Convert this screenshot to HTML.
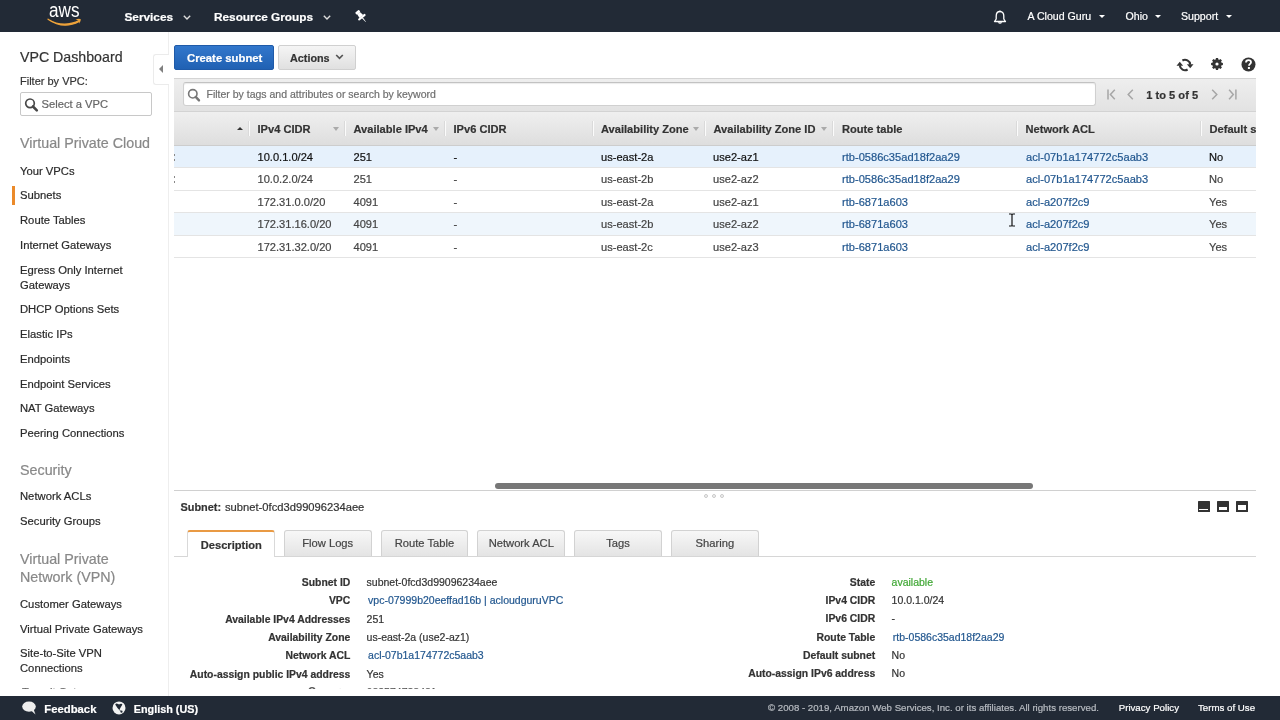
<!DOCTYPE html>
<html><head><meta charset="utf-8">
<style>
*{box-sizing:border-box;margin:0;padding:0}
html,body{width:1280px;height:720px;overflow:hidden;background:#fff;font-family:"Liberation Sans",sans-serif;color:#333;position:relative}
.a{position:absolute;white-space:nowrap}
#w{position:absolute;left:0;top:0;width:1280px;height:720px;will-change:transform}
.a{-webkit-text-stroke:0.2px currentColor}
</style></head><body><div id="w">
<div style="position:absolute;left:0;top:0;width:1280px;height:32px;background:#222a36"></div>
<svg class="a" style="left:40px;top:0px" width="50" height="32" viewBox="0 0 50 32">
<text x="9" y="16.8" font-family="Liberation Sans" font-size="19.5" fill="#fff" textLength="30.5" lengthAdjust="spacingAndGlyphs">aws</text>
<path d="M8 19.2 Q23 28.5 39.5 20.3 L39.3 21.5 Q23 30 8 19.2 Z" fill="#eda23a" stroke="#eda23a" stroke-width="1.2" stroke-linejoin="round"/>
<path d="M35.5 19.4 Q39.5 18.2 40.8 19.3 Q41 21 39 23.8 Q39.6 21.3 38.6 20.6 Q37.5 20 35.5 19.4 Z" fill="#eda23a"/>
</svg>
<div class="a" style="left:124.5px;top:12px;font-size:11.8px;line-height:11.8px;color:#fff;font-weight:700;">Services</div>
<svg class="a" style="left:183px;top:15px" width="8" height="5" viewBox="0 0 8 5"><path d="M0.8 0.8 L4 4 L7.2 0.8" stroke="#ddd" stroke-width="1.4" fill="none"/></svg>
<div class="a" style="left:214px;top:12px;font-size:11.8px;line-height:11.8px;color:#fff;font-weight:700;">Resource Groups</div>
<svg class="a" style="left:323px;top:15px" width="8" height="5" viewBox="0 0 8 5"><path d="M0.8 0.8 L4 4 L7.2 0.8" stroke="#ddd" stroke-width="1.4" fill="none"/></svg>
<svg class="a" style="left:350px;top:6px" width="20" height="20" viewBox="-10 -10 20 20"><g transform="translate(1.2 0.4) rotate(-40) scale(1.05)" fill="#fff"><rect x="-2.3" y="-6.4" width="4.6" height="2.6" rx="0.8"/><path d="M-1.7 -4 L1.7 -4 L2.3 0.2 L-2.3 0.2 Z"/><rect x="-4.3" y="0" width="8.6" height="2" rx="0.8"/><path d="M-0.6 1.8 L0.6 1.8 L0.2 6.8 L-0.2 6.8 Z"/></g></svg>
<svg class="a" style="left:992.5px;top:9.5px" width="14" height="15" viewBox="0 0 14 15"><path d="M7 1.5 C4.2 1.5 3.2 3.8 3.2 6 L3.2 9 L1.5 11.5 L12.5 11.5 L10.8 9 L10.8 6 C10.8 3.8 9.8 1.5 7 1.5 Z" stroke="#fff" stroke-width="1.3" fill="none" stroke-linejoin="round"/><path d="M4.6 12.2 Q7 15.3 9.4 12.2 Z" fill="#fff"/><circle cx="7" cy="1.3" r="0.9" fill="#fff"/></svg>
<div class="a" style="left:1027.5px;top:11px;font-size:10.6px;line-height:10.6px;color:#fff;">A Cloud Guru</div>
<div class="a" style="left:1098.5px;top:15.3px;width:0;height:0;border-left:3px solid transparent;border-right:3px solid transparent;border-top:3.5px solid #fff"></div>
<div class="a" style="left:1125.5px;top:11px;font-size:10.6px;line-height:10.6px;color:#fff;">Ohio</div>
<div class="a" style="left:1154.5px;top:15.3px;width:0;height:0;border-left:3px solid transparent;border-right:3px solid transparent;border-top:3.5px solid #fff"></div>
<div class="a" style="left:1181px;top:11px;font-size:10.6px;line-height:10.6px;color:#fff;">Support</div>
<div class="a" style="left:1226px;top:15.3px;width:0;height:0;border-left:3px solid transparent;border-right:3px solid transparent;border-top:3.5px solid #fff"></div>
<div style="position:absolute;left:168px;top:32px;width:1px;height:664px;background:#eeeeee"></div>
<div class="a" style="left:20px;top:50px;font-size:14.2px;line-height:14.2px;color:#333;">VPC Dashboard</div>
<div class="a" style="left:20px;top:76px;font-size:11px;line-height:11px;color:#333;">Filter by VPC:</div>
<div class="a" style="left:20px;top:92px;width:132px;height:24px;border:1px solid #c8c8c8;border-radius:2px;background:#fff"></div>
<svg class="a" style="left:24px;top:96.5px" width="15" height="16" viewBox="0 0 15 16"><circle cx="6" cy="6.3" r="4.3" stroke="#484848" stroke-width="1.7" fill="none"/><path d="M9 9.5 L12.8 13.3" stroke="#484848" stroke-width="2.6" stroke-linecap="round"/></svg>
<div class="a" style="left:41.5px;top:99px;font-size:11.2px;line-height:11.2px;color:#666;">Select a VPC</div>
<div class="a" style="left:153px;top:53.5px;width:16px;height:31.5px;border:1px solid #ebebeb;border-right:none;border-radius:3px 0 0 3px;background:#fff"></div>
<div class="a" style="left:159px;top:64.8px;width:0;height:0;border-top:4.4px solid transparent;border-bottom:4.4px solid transparent;border-right:4.8px solid #808080"></div>
<div class="a" style="left:20px;top:136px;font-size:14.3px;line-height:14.3px;color:#888;">Virtual Private Cloud</div>
<div class="a" style="left:20px;top:166px;font-size:11.25px;line-height:11.25px;color:#2a2a2a;">Your VPCs</div>
<div class="a" style="left:20px;top:190px;font-size:11.25px;line-height:11.25px;color:#2a2a2a;">Subnets</div>
<div class="a" style="left:20px;top:215px;font-size:11.25px;line-height:11.25px;color:#2a2a2a;">Route Tables</div>
<div class="a" style="left:20px;top:240px;font-size:11.25px;line-height:11.25px;color:#2a2a2a;">Internet Gateways</div>
<div class="a" style="left:20px;top:265px;font-size:11.25px;line-height:11.25px;color:#2a2a2a;">Egress Only Internet</div>
<div class="a" style="left:20px;top:280px;font-size:11.25px;line-height:11.25px;color:#2a2a2a;">Gateways</div>
<div class="a" style="left:20px;top:304px;font-size:11.25px;line-height:11.25px;color:#2a2a2a;">DHCP Options Sets</div>
<div class="a" style="left:20px;top:329px;font-size:11.25px;line-height:11.25px;color:#2a2a2a;">Elastic IPs</div>
<div class="a" style="left:20px;top:354px;font-size:11.25px;line-height:11.25px;color:#2a2a2a;">Endpoints</div>
<div class="a" style="left:20px;top:379px;font-size:11.25px;line-height:11.25px;color:#2a2a2a;">Endpoint Services</div>
<div class="a" style="left:20px;top:403px;font-size:11.25px;line-height:11.25px;color:#2a2a2a;">NAT Gateways</div>
<div class="a" style="left:20px;top:428px;font-size:11.25px;line-height:11.25px;color:#2a2a2a;">Peering Connections</div>
<div class="a" style="left:12px;top:185.5px;width:2.5px;height:19px;background:#eb8a2a"></div>
<div class="a" style="left:20px;top:463px;font-size:14.3px;line-height:14.3px;color:#888;">Security</div>
<div class="a" style="left:20px;top:491px;font-size:11.25px;line-height:11.25px;color:#2a2a2a;">Network ACLs</div>
<div class="a" style="left:20px;top:516px;font-size:11.25px;line-height:11.25px;color:#2a2a2a;">Security Groups</div>
<div class="a" style="left:20px;top:552px;font-size:14.3px;line-height:14.3px;color:#888;">Virtual Private</div>
<div class="a" style="left:20px;top:570px;font-size:14.3px;line-height:14.3px;color:#888;">Network (VPN)</div>
<div class="a" style="left:20px;top:599px;font-size:11.25px;line-height:11.25px;color:#2a2a2a;">Customer Gateways</div>
<div class="a" style="left:20px;top:624px;font-size:11.25px;line-height:11.25px;color:#2a2a2a;">Virtual Private Gateways</div>
<div class="a" style="left:20px;top:648px;font-size:11.25px;line-height:11.25px;color:#2a2a2a;">Site-to-Site VPN</div>
<div class="a" style="left:20px;top:663px;font-size:11.25px;line-height:11.25px;color:#2a2a2a;">Connections</div>
<div class="a" style="left:174px;top:45px;width:100px;height:25px;border-radius:2px;background:linear-gradient(#3277cc,#2061b3);border:1px solid #1f5aa8"></div>
<div class="a" style="left:187px;top:53px;font-size:11.3px;line-height:11.3px;color:#fff;font-weight:700;">Create subnet</div>
<div class="a" style="left:277.5px;top:45px;width:78px;height:25px;border-radius:2px;background:linear-gradient(#f5f5f5,#e0e0e0);border:1px solid #d0d0d0"></div>
<div class="a" style="left:290px;top:53px;font-size:10.8px;line-height:10.8px;color:#333;font-weight:700;">Actions</div>
<svg class="a" style="left:335px;top:54px" width="9" height="6" viewBox="0 0 9 6"><path d="M1.2 1 L4.5 4.3 L7.8 1" stroke="#555" stroke-width="1.7" fill="none"/></svg>
<svg class="a" style="left:1175px;top:57px" width="20" height="16" viewBox="0 0 20 16">
<path d="M7.4 3.5 A5.2 5.2 0 0 1 15.2 7.6" stroke="#333" stroke-width="2.1" fill="none"/>
<path d="M12.6 12.5 A5.2 5.2 0 0 1 4.8 8.4" stroke="#333" stroke-width="2.1" fill="none"/>
<path d="M11.9 7.2 L18.5 7.2 L15.2 11.3 Z" fill="#333"/>
<path d="M1.5 8.8 L8.1 8.8 L4.8 4.7 Z" fill="#333"/>
</svg>
<svg class="a" style="left:1210.1px;top:56.9px" width="14" height="14" viewBox="0 0 14 14"><path d="M5.60 2.83 L5.95 1.09 L8.05 1.09 L8.40 2.83 L8.96 3.06 L10.43 2.08 L11.92 3.57 L10.94 5.04 L11.17 5.60 L12.91 5.95 L12.91 8.05 L11.17 8.40 L10.94 8.96 L11.92 10.43 L10.43 11.92 L8.96 10.94 L8.40 11.17 L8.05 12.91 L5.95 12.91 L5.60 11.17 L5.04 10.94 L3.57 11.92 L2.08 10.43 L3.06 8.96 L2.83 8.40 L1.09 8.05 L1.09 5.95 L2.83 5.60 L3.06 5.04 L2.08 3.57 L3.57 2.08 L5.04 3.06 Z" fill="#333"/><circle cx="7" cy="7" r="4.5" fill="#333"/><circle cx="7" cy="7" r="1.6" fill="#fff"/></svg>
<svg class="a" style="left:1241px;top:57px" width="15" height="15" viewBox="0 0 15 15">
<circle cx="7.5" cy="7.5" r="7" fill="#333"/>
<path d="M5 5.6 C5 3.9 6.1 3.2 7.5 3.2 C9 3.2 10 4.1 10 5.3 C10 6.9 8 7 8 8.8" stroke="#fff" stroke-width="1.8" fill="none"/>
<rect x="6.9" y="10" width="2" height="2" fill="#fff"/></svg>
<div class="a" style="left:174px;top:77.5px;width:1082px;height:34.5px;background:linear-gradient(#eeeeee,#e2e2e2);border-top:1px solid #d4d4d4"></div>
<div class="a" style="left:182.5px;top:82px;width:913px;height:24px;background:#fff;border:1px solid #d0d0d0;border-top-color:#c2c2c2;border-radius:3px;box-shadow:inset 0 1px 1px rgba(0,0,0,0.08)"></div>
<svg class="a" style="left:187px;top:88px" width="14" height="15" viewBox="0 0 14 15"><circle cx="5.8" cy="5.8" r="4.2" stroke="#777" stroke-width="1.6" fill="none"/><path d="M8.7 8.9 L12 12.4" stroke="#777" stroke-width="2.4" stroke-linecap="round"/></svg>
<div class="a" style="left:206.5px;top:89px;font-size:10.5px;line-height:10.5px;color:#6f6f6f;">Filter by tags and attributes or search by keyword</div>
<svg class="a" style="left:1105px;top:89px" width="140" height="12" viewBox="0 0 140 12" stroke="#a6a6a6" stroke-width="1.5" fill="none"><path d="M3 0.4 V10.6"/><path d="M9.8 0.8 L5.4 5.5 L9.8 10.3"/><path d="M27.8 0.8 L23.2 5.5 L27.8 10.3"/><path d="M107.2 0.8 L111.8 5.5 L107.2 10.3"/><path d="M124.1 0.8 L128.3 5.5 L124.1 10.3"/><path d="M130.9 0.4 V10.6"/></svg>
<div class="a" style="left:1146.3px;top:90px;font-size:11.1px;line-height:11.1px;color:#333;font-weight:700;">1 to 5 of 5</div>
<div class="a" style="left:174px;top:111px;width:1082px;height:35px;background:linear-gradient(#efefef,#dedede);border-top:1px solid #d3d3d3;border-bottom:1px solid #cdcdcd"></div>
<div class="a" style="left:248px;top:121px;width:1px;height:15px;background:#dadada;box-shadow:1px 0 0 #fbfbfb"></div>
<div class="a" style="left:344px;top:121px;width:1px;height:15px;background:#dadada;box-shadow:1px 0 0 #fbfbfb"></div>
<div class="a" style="left:444px;top:121px;width:1px;height:15px;background:#dadada;box-shadow:1px 0 0 #fbfbfb"></div>
<div class="a" style="left:592px;top:121px;width:1px;height:15px;background:#dadada;box-shadow:1px 0 0 #fbfbfb"></div>
<div class="a" style="left:704px;top:121px;width:1px;height:15px;background:#dadada;box-shadow:1px 0 0 #fbfbfb"></div>
<div class="a" style="left:832px;top:121px;width:1px;height:15px;background:#dadada;box-shadow:1px 0 0 #fbfbfb"></div>
<div class="a" style="left:1015.5px;top:121px;width:1px;height:15px;background:#dadada;box-shadow:1px 0 0 #fbfbfb"></div>
<div class="a" style="left:1200px;top:121px;width:1px;height:15px;background:#dadada;box-shadow:1px 0 0 #fbfbfb"></div>
<div class="a" style="left:237.3px;top:126.5px;width:0;height:0;border-left:3px solid transparent;border-right:3px solid transparent;border-bottom:3.5px solid #333"></div>
<div class="a" style="left:333px;top:127px;width:0;height:0;border-left:3.5px solid transparent;border-right:3.5px solid transparent;border-top:4px solid #aaa"></div>
<div class="a" style="left:432.5px;top:127px;width:0;height:0;border-left:3.5px solid transparent;border-right:3.5px solid transparent;border-top:4px solid #aaa"></div>
<div class="a" style="left:693px;top:127px;width:0;height:0;border-left:3.5px solid transparent;border-right:3.5px solid transparent;border-top:4px solid #aaa"></div>
<div class="a" style="left:820.5px;top:127px;width:0;height:0;border-left:3.5px solid transparent;border-right:3.5px solid transparent;border-top:4px solid #aaa"></div>
<div class="a" style="left:257.5px;top:124px;font-size:11.1px;line-height:11.1px;color:#333;font-weight:700;">IPv4 CIDR</div>
<div class="a" style="left:353.5px;top:124px;font-size:11.1px;line-height:11.1px;color:#333;font-weight:700;">Available IPv4</div>
<div class="a" style="left:453.5px;top:124px;font-size:11.1px;line-height:11.1px;color:#333;font-weight:700;">IPv6 CIDR</div>
<div class="a" style="left:601px;top:124px;font-size:11.1px;line-height:11.1px;color:#333;font-weight:700;">Availability Zone</div>
<div class="a" style="left:713.5px;top:124px;font-size:11.1px;line-height:11.1px;color:#333;font-weight:700;">Availability Zone ID</div>
<div class="a" style="left:842px;top:124px;font-size:11.1px;line-height:11.1px;color:#333;font-weight:700;">Route table</div>
<div class="a" style="left:1025.5px;top:124px;font-size:11.1px;line-height:11.1px;color:#333;font-weight:700;">Network ACL</div>
<div class="a" style="left:1209.5px;top:124px;font-size:11.1px;line-height:11.1px;color:#333;font-weight:700;">Default subnet</div>
<div class="a" style="left:174px;top:146.0px;width:1082px;height:22.4px;background:#e6f1fc;border-bottom:1px solid #e4e4e4"></div>
<div class="a" style="left:174px;top:168.4px;width:1082px;height:22.4px;background:#fff;border-bottom:1px solid #e4e4e4"></div>
<div class="a" style="left:174px;top:190.8px;width:1082px;height:22.4px;background:#fff;border-bottom:1px solid #e4e4e4"></div>
<div class="a" style="left:174px;top:213.2px;width:1082px;height:22.4px;background:#eff6fc;border-bottom:1px solid #e4e4e4"></div>
<div class="a" style="left:174px;top:235.6px;width:1082px;height:22.4px;background:#fff;border-bottom:1px solid #e4e4e4"></div>
<div class="a" style="left:257.5px;top:152px;font-size:11.1px;line-height:11.1px;color:#111;">10.0.1.0/24</div>
<div class="a" style="left:353.5px;top:152px;font-size:11.1px;line-height:11.1px;color:#111;">251</div>
<div class="a" style="left:453.5px;top:152px;font-size:11.1px;line-height:11.1px;color:#111;">-</div>
<div class="a" style="left:601px;top:152px;font-size:11.1px;line-height:11.1px;color:#111;">us-east-2a</div>
<div class="a" style="left:713px;top:152px;font-size:11.1px;line-height:11.1px;color:#111;">use2-az1</div>
<div class="a" style="left:842px;top:152px;font-size:11.1px;line-height:11.1px;color:#22578f;">rtb-0586c35ad18f2aa29</div>
<div class="a" style="left:1026px;top:152px;font-size:11.1px;line-height:11.1px;color:#22578f;">acl-07b1a174772c5aab3</div>
<div class="a" style="left:1209px;top:152px;font-size:11.1px;line-height:11.1px;color:#111;">No</div>
<div class="a" style="left:257.5px;top:174px;font-size:11.1px;line-height:11.1px;color:#444;">10.0.2.0/24</div>
<div class="a" style="left:353.5px;top:174px;font-size:11.1px;line-height:11.1px;color:#444;">251</div>
<div class="a" style="left:453.5px;top:174px;font-size:11.1px;line-height:11.1px;color:#444;">-</div>
<div class="a" style="left:601px;top:174px;font-size:11.1px;line-height:11.1px;color:#444;">us-east-2b</div>
<div class="a" style="left:713px;top:174px;font-size:11.1px;line-height:11.1px;color:#444;">use2-az2</div>
<div class="a" style="left:842px;top:174px;font-size:11.1px;line-height:11.1px;color:#22578f;">rtb-0586c35ad18f2aa29</div>
<div class="a" style="left:1026px;top:174px;font-size:11.1px;line-height:11.1px;color:#22578f;">acl-07b1a174772c5aab3</div>
<div class="a" style="left:1209px;top:174px;font-size:11.1px;line-height:11.1px;color:#444;">No</div>
<div class="a" style="left:257.5px;top:197px;font-size:11.1px;line-height:11.1px;color:#444;">172.31.0.0/20</div>
<div class="a" style="left:353.5px;top:197px;font-size:11.1px;line-height:11.1px;color:#444;">4091</div>
<div class="a" style="left:453.5px;top:197px;font-size:11.1px;line-height:11.1px;color:#444;">-</div>
<div class="a" style="left:601px;top:197px;font-size:11.1px;line-height:11.1px;color:#444;">us-east-2a</div>
<div class="a" style="left:713px;top:197px;font-size:11.1px;line-height:11.1px;color:#444;">use2-az1</div>
<div class="a" style="left:842px;top:197px;font-size:11.1px;line-height:11.1px;color:#22578f;">rtb-6871a603</div>
<div class="a" style="left:1026px;top:197px;font-size:11.1px;line-height:11.1px;color:#22578f;">acl-a207f2c9</div>
<div class="a" style="left:1209px;top:197px;font-size:11.1px;line-height:11.1px;color:#444;">Yes</div>
<div class="a" style="left:257.5px;top:219px;font-size:11.1px;line-height:11.1px;color:#444;">172.31.16.0/20</div>
<div class="a" style="left:353.5px;top:219px;font-size:11.1px;line-height:11.1px;color:#444;">4091</div>
<div class="a" style="left:453.5px;top:219px;font-size:11.1px;line-height:11.1px;color:#444;">-</div>
<div class="a" style="left:601px;top:219px;font-size:11.1px;line-height:11.1px;color:#444;">us-east-2b</div>
<div class="a" style="left:713px;top:219px;font-size:11.1px;line-height:11.1px;color:#444;">use2-az2</div>
<div class="a" style="left:842px;top:219px;font-size:11.1px;line-height:11.1px;color:#22578f;">rtb-6871a603</div>
<div class="a" style="left:1026px;top:219px;font-size:11.1px;line-height:11.1px;color:#22578f;">acl-a207f2c9</div>
<div class="a" style="left:1209px;top:219px;font-size:11.1px;line-height:11.1px;color:#444;">Yes</div>
<div class="a" style="left:257.5px;top:242px;font-size:11.1px;line-height:11.1px;color:#444;">172.31.32.0/20</div>
<div class="a" style="left:353.5px;top:242px;font-size:11.1px;line-height:11.1px;color:#444;">4091</div>
<div class="a" style="left:453.5px;top:242px;font-size:11.1px;line-height:11.1px;color:#444;">-</div>
<div class="a" style="left:601px;top:242px;font-size:11.1px;line-height:11.1px;color:#444;">us-east-2c</div>
<div class="a" style="left:713px;top:242px;font-size:11.1px;line-height:11.1px;color:#444;">use2-az3</div>
<div class="a" style="left:842px;top:242px;font-size:11.1px;line-height:11.1px;color:#22578f;">rtb-6871a603</div>
<div class="a" style="left:1026px;top:242px;font-size:11.1px;line-height:11.1px;color:#22578f;">acl-a207f2c9</div>
<div class="a" style="left:1209px;top:242px;font-size:11.1px;line-height:11.1px;color:#444;">Yes</div>
<div class="a" style="left:1256px;top:78px;width:24px;height:200px;background:#fff"></div>
<div class="a" style="left:174px;top:154.0px;width:1.2px;height:1.6px;background:#888"></div><div class="a" style="left:174px;top:159.0px;width:1.2px;height:1.6px;background:#888"></div>
<div class="a" style="left:174px;top:176.4px;width:1.2px;height:1.6px;background:#888"></div><div class="a" style="left:174px;top:181.4px;width:1.2px;height:1.6px;background:#888"></div>
<svg class="a" style="left:1008px;top:213px" width="8" height="14" viewBox="0 0 8 14"><path d="M1 1 H3 Q4 1.5 5 1 H7 M4 1.5 V12.5 M1 13 H3 Q4 12.5 5 13 H7" stroke="#111" stroke-width="1.2" fill="none"/></svg>
<div class="a" style="left:494.5px;top:483px;width:538px;height:6px;border-radius:3px;background:#777"></div>
<div class="a" style="left:174px;top:490px;width:1082px;height:1px;background:#d0d0d0"></div>
<div class="a" style="left:704px;top:493.5px;width:4px;height:4px;border-radius:50%;border:1px solid #c8c8c8;background:#f4f4f4"></div>
<div class="a" style="left:712px;top:493.5px;width:4px;height:4px;border-radius:50%;border:1px solid #c8c8c8;background:#f4f4f4"></div>
<div class="a" style="left:720px;top:493.5px;width:4px;height:4px;border-radius:50%;border:1px solid #c8c8c8;background:#f4f4f4"></div>
<div class="a" style="left:1198px;top:501px;width:11.5px;height:10.8px;background:#333;border-radius:0.5px"></div><div class="a" style="left:1199.4px;top:508.6px;width:8.7px;height:1.7px;background:#fff"></div>
<div class="a" style="left:1217.2px;top:501px;width:11.5px;height:10.8px;background:#333;border-radius:0.5px"></div><div class="a" style="left:1218.6000000000001px;top:507px;width:8.7px;height:3.3px;background:#fff"></div>
<div class="a" style="left:1236.2px;top:501px;width:11.5px;height:10.8px;background:#333;border-radius:0.5px"></div><div class="a" style="left:1237.6000000000001px;top:505.4px;width:8.7px;height:4.9px;background:#fff"></div>
<div class="a" style="left:180.5px;top:502px;font-size:10.9px;line-height:10.9px;color:#333;"><b>Subnet:</b></div>
<div class="a" style="left:225px;top:502px;font-size:11.2px;line-height:11.2px;color:#333;">subnet-0fcd3d99096234aee</div>
<div class="a" style="left:174px;top:556px;width:1082px;height:1px;background:#d6d6d6"></div>
<div class="a" style="left:187.0px;top:530px;width:87.8px;height:27px;background:#fff;border:1px solid #d9d9d9;border-bottom:none;border-top:2px solid #e99a44;border-radius:3px 3px 0 0"></div>
<div class="a" style="left:200.8px;top:540px;font-size:11.1px;line-height:11.1px;color:#333;font-weight:700;">Description</div>
<div class="a" style="left:283.8px;top:530px;width:87.8px;height:26px;background:linear-gradient(#f7f7f7,#e4e4e4);border:1px solid #d2d2d2;border-bottom:none;border-radius:3px 3px 0 0"></div>
<div class="a" style="left:283.8px;top:537.5px;width:87.8px;text-align:center;font-size:11.2px;line-height:11.2px;color:#444;top:538.32px">Flow Logs</div>
<div class="a" style="left:380.6px;top:530px;width:87.8px;height:26px;background:linear-gradient(#f7f7f7,#e4e4e4);border:1px solid #d2d2d2;border-bottom:none;border-radius:3px 3px 0 0"></div>
<div class="a" style="left:380.6px;top:537.5px;width:87.8px;text-align:center;font-size:11.2px;line-height:11.2px;color:#444;top:538.32px">Route Table</div>
<div class="a" style="left:477.4px;top:530px;width:87.8px;height:26px;background:linear-gradient(#f7f7f7,#e4e4e4);border:1px solid #d2d2d2;border-bottom:none;border-radius:3px 3px 0 0"></div>
<div class="a" style="left:477.4px;top:537.5px;width:87.8px;text-align:center;font-size:11.2px;line-height:11.2px;color:#444;top:538.32px">Network ACL</div>
<div class="a" style="left:574.2px;top:530px;width:87.8px;height:26px;background:linear-gradient(#f7f7f7,#e4e4e4);border:1px solid #d2d2d2;border-bottom:none;border-radius:3px 3px 0 0"></div>
<div class="a" style="left:574.2px;top:537.5px;width:87.8px;text-align:center;font-size:11.2px;line-height:11.2px;color:#444;top:538.32px">Tags</div>
<div class="a" style="left:671.0px;top:530px;width:87.8px;height:26px;background:linear-gradient(#f7f7f7,#e4e4e4);border:1px solid #d2d2d2;border-bottom:none;border-radius:3px 3px 0 0"></div>
<div class="a" style="left:671.0px;top:537.5px;width:87.8px;text-align:center;font-size:11.2px;line-height:11.2px;color:#444;top:538.32px">Sharing</div>
<div class="a" style="right:929.7px;top:578px;font-size:10.4px;line-height:10.4px;color:#333;font-weight:700;">Subnet ID</div>
<div class="a" style="left:366.6px;top:577px;font-size:10.5px;line-height:10.5px;color:#333;">subnet-0fcd3d99096234aee</div>
<div class="a" style="right:929.7px;top:596px;font-size:10.4px;line-height:10.4px;color:#333;font-weight:700;">VPC</div>
<div class="a" style="left:368.1px;top:595px;font-size:10.5px;line-height:10.5px;color:#22578f;">vpc-07999b20eeffad16b | acloudguruVPC</div>
<div class="a" style="right:929.7px;top:615px;font-size:10.4px;line-height:10.4px;color:#333;font-weight:700;">Available IPv4 Addresses</div>
<div class="a" style="left:366.6px;top:614px;font-size:10.5px;line-height:10.5px;color:#333;">251</div>
<div class="a" style="right:929.7px;top:633px;font-size:10.4px;line-height:10.4px;color:#333;font-weight:700;">Availability Zone</div>
<div class="a" style="left:366.6px;top:632px;font-size:10.5px;line-height:10.5px;color:#333;">us-east-2a (use2-az1)</div>
<div class="a" style="right:929.7px;top:651px;font-size:10.4px;line-height:10.4px;color:#333;font-weight:700;">Network ACL</div>
<div class="a" style="left:368.1px;top:650px;font-size:10.5px;line-height:10.5px;color:#22578f;">acl-07b1a174772c5aab3</div>
<div class="a" style="right:929.7px;top:670px;font-size:10.4px;line-height:10.4px;color:#333;font-weight:700;">Auto-assign public IPv4 address</div>
<div class="a" style="left:366.6px;top:669px;font-size:10.5px;line-height:10.5px;color:#333;">Yes</div>
<div class="a" style="right:404.79999999999995px;top:578px;font-size:10.4px;line-height:10.4px;color:#333;font-weight:700;">State</div>
<div class="a" style="left:891.6px;top:577px;font-size:10.5px;line-height:10.5px;color:#40a735;">available</div>
<div class="a" style="right:404.79999999999995px;top:596px;font-size:10.4px;line-height:10.4px;color:#333;font-weight:700;">IPv4 CIDR</div>
<div class="a" style="left:891.6px;top:595px;font-size:10.5px;line-height:10.5px;color:#333;">10.0.1.0/24</div>
<div class="a" style="right:404.79999999999995px;top:614px;font-size:10.4px;line-height:10.4px;color:#333;font-weight:700;">IPv6 CIDR</div>
<div class="a" style="left:891.6px;top:613px;font-size:10.5px;line-height:10.5px;color:#333;">-</div>
<div class="a" style="right:404.79999999999995px;top:633px;font-size:10.4px;line-height:10.4px;color:#333;font-weight:700;">Route Table</div>
<div class="a" style="left:892.8000000000001px;top:632px;font-size:10.5px;line-height:10.5px;color:#22578f;">rtb-0586c35ad18f2aa29</div>
<div class="a" style="right:404.79999999999995px;top:651px;font-size:10.4px;line-height:10.4px;color:#333;font-weight:700;">Default subnet</div>
<div class="a" style="left:891.6px;top:650px;font-size:10.5px;line-height:10.5px;color:#333;">No</div>
<div class="a" style="right:404.79999999999995px;top:669px;font-size:10.4px;line-height:10.4px;color:#333;font-weight:700;">Auto-assign IPv6 address</div>
<div class="a" style="left:891.6px;top:668px;font-size:10.5px;line-height:10.5px;color:#333;">No</div>
<div class="a" style="left:170px;top:687px;width:1100px;height:2px;overflow:hidden"><div class="a" style="right:929.7px;top:-0.2px;font-size:10.4px;line-height:10.4px;font-weight:700;color:#555">Owner</div><div class="a" style="left:196.6px;top:-0.2px;font-size:10.5px;line-height:10.5px;color:#555">682574728481</div></div>
<div class="a" style="left:0;top:687.6px;width:168px;height:1.8px;overflow:hidden"><div class="a" style="left:22px;top:-0.2px;font-size:11.1px;line-height:11.1px;color:#666">Transit Gateways</div></div>
<div class="a" style="left:0;top:696px;width:1280px;height:24px;background:#222a36"></div>
<svg class="a" style="left:21px;top:700px" width="17" height="16" viewBox="0 0 17 16"><ellipse cx="8" cy="6.6" rx="6.8" ry="5.1" fill="#eee"/><path d="M9.5 10 L14.5 14.5 L12.5 9 Z" fill="#eee"/></svg>
<div class="a" style="left:44.3px;top:704px;font-size:11.3px;line-height:11.3px;color:#fff;font-weight:700;">Feedback</div>
<svg class="a" style="left:112.3px;top:701px" width="14" height="14" viewBox="0 0 14 14"><circle cx="7" cy="6.9" r="6.5" fill="#f2f2f2"/><path d="M3.2 3.4 Q4.4 2 6 3 Q7 3.8 8 3.1 Q9.6 2.1 10.4 3.6 Q8.8 6.2 7.3 9 Q5.2 6.8 3.2 3.4 Z" fill="#222a36"/><path d="M7.3 8.8 L9.2 10.5" stroke="#222a36" stroke-width="0.7"/><circle cx="9.5" cy="10.7" r="1.1" fill="#222a36"/></svg>
<div class="a" style="left:133.8px;top:704px;font-size:10.8px;line-height:10.8px;color:#fff;font-weight:700;">English (US)</div>
<div class="a" style="left:768px;top:703px;font-size:9.66px;line-height:9.66px;color:#b8bcc2;">© 2008 - 2019, Amazon Web Services, Inc. or its affiliates. All rights reserved.</div>
<div class="a" style="left:1118.7px;top:703px;font-size:9.7px;line-height:9.7px;color:#fff;">Privacy Policy</div>
<div class="a" style="left:1198px;top:703px;font-size:9.7px;line-height:9.7px;color:#fff;">Terms of Use</div>
</div></body></html>
